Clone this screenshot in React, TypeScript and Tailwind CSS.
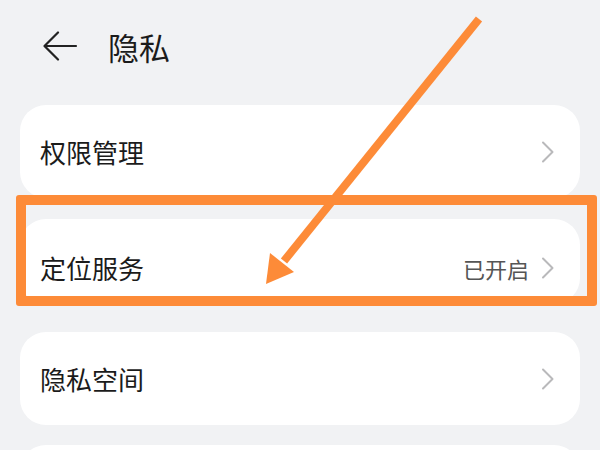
import React from "react";

const Chevron = () => (
  <svg width="14" height="22" viewBox="0 0 14 22" fill="none">
    <path d="M2 1.5 L11.5 11 L2 20.5" stroke="#b9b9bb" strokeWidth="2" strokeLinecap="round" strokeLinejoin="round" />
  </svg>
);

function Card({ label, value, className }: { label: string; value?: string; className: string }) {
  return (
    <div className={`mx-[20px] flex items-center justify-between rounded-[26px] bg-white pl-[20px] pr-[25px] ${className}`}>
      <span className="text-[26px] leading-none text-[#1b1b1b]">{label}</span>
      <div className="flex items-center gap-[12px]">
        {value && <span className="text-[22px] leading-none text-[#555]">{value}</span>}
        <Chevron />
      </div>
    </div>
  );
}

export default function App() {
  return (
    <div
      className="relative h-[450px] w-[600px] overflow-hidden bg-[#f1f2f4]"
      style={{ fontFamily: '"Noto Sans CJK SC", "Noto Sans", sans-serif' }}
    >
      <div className="flex h-[92px] items-center pl-[42px]">
        <svg width="36" height="30" viewBox="0 0 36 30" fill="none">
          <path d="M16 1.5 L2.5 15 L16 28.5 M2.5 15 H34" stroke="#222" strokeWidth="2.2" strokeLinecap="round" strokeLinejoin="round" />
        </svg>
        <span className="ml-[30px] text-[31px] leading-none text-[#1b1b1b]">隐私</span>
      </div>
      <div className="flex flex-col pt-[13px]">
        <Card label="权限管理" className="h-[93px]" />
        <Card label="定位服务" value="已开启" className="mt-[21px] h-[85px] pt-[12px]" />
        <Card label="隐私空间" className="mt-[28px] h-[93px]" />
        <Card label="" className="mt-[20px] h-[93px]" />
      </div>
      <div className="absolute left-[16px] top-[195px] h-[111px] w-[581px] rounded-[3px] border-[10px] border-[#fd8b38]" />
      <svg className="absolute left-0 top-0" width="600" height="450" viewBox="0 0 600 450">
        <line x1="479" y1="19" x2="284" y2="261" stroke="#fd8b38" strokeWidth="8" />
        <polygon points="266,284 270,253 294,272" fill="#fd8b38" />
      </svg>
    </div>
  );
}
